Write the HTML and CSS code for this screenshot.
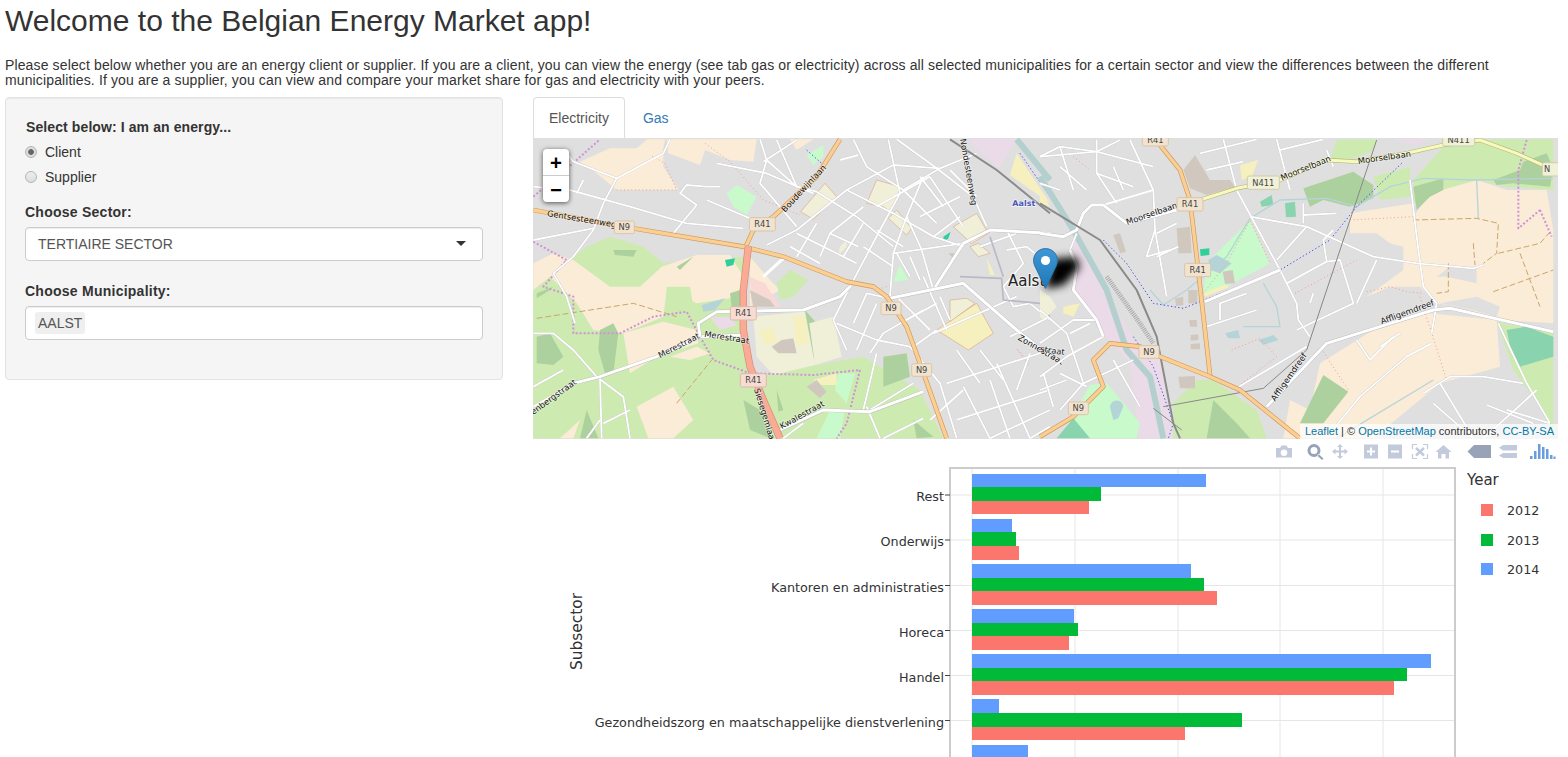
FILE: index.html
```html
<!DOCTYPE html>
<html lang="en">
<head>
    <meta charset="UTF-8">
    <meta name="viewport" content="width=device-width, initial-scale=1.0">
    <title>Belgian Energy Market</title>
    <link rel="stylesheet" href="styles.css">
</head>
<body>
    <div class="page">
        <h2 class="title">Welcome to the Belgian Energy Market app!</h2>
        <p class="intro">Please select below whether you are an energy client or supplier. If you are a client, you can view the energy (see tab gas or electricity) across all selected municipalities for a certain sector and view the differences between the different municipalities. If you are a supplier, you can view and compare your market share for gas and electricity with your peers.</p>

        <div class="row">
            <div class="sidebar">
                <div class="field field-radio">
                    <div class="label label-first">Select below: I am an energy...</div>
                    <label class="radio"><input type="radio" name="kind" checked> Client</label>
                    <label class="radio"><input type="radio" name="kind"> Supplier</label>
                </div>
                <div class="field field-sector">
                    <div class="label">Choose Sector:</div>
                    <div class="select">TERTIAIRE SECTOR<span class="caret"></span></div>
                </div>
                <div class="field">
                    <div class="label">Choose Municipality:</div>
                    <div class="select select-multi"><span class="chip">AALST</span></div>
                </div>
            </div>

            <div class="main">
                <ul class="tabs">
                    <li class="tab active">Electricity</li>
                    <li class="tab">Gas</li>
                </ul>

                <div class="map">
                    <svg class="map-tiles" viewBox="0 0 1025 301" width="1025" height="301">
                        <defs>
                            <!-- white street network, drawn twice: casing and fill -->
                            <g id="streets-left">
                                <path d="M10,290 L120,300 300,350 470,400 640,415"/>
                                <path d="M110,190 L130,215 260,265 400,190 420,148"/>
                                <path d="M260,265 L220,340 190,420 130,500 70,550 110,620 135,700"/>
                                <path d="M10,450 L190,415"/>
                                <path d="M160,270 L140,310"/>
                                <path d="M430,430 L500,345 450,310 470,285 530,290 570,290"/>
                                <path d="M530,330 L660,385"/>
                                <path d="M560,220 L710,250 850,310"/>
                                <path d="M710,210 L690,280 800,410"/>
                                <path d="M690,148 L710,210 800,290 860,305 980,380 1090,470"/>
                                <path d="M970,148 L1010,230 1120,300 1220,400"/>
                                <path d="M1075,148 L1110,310 1050,420 960,590 910,690 950,780"/>
                                <path d="M1100,148 L1220,235 1330,320 1370,410"/>
                                <path d="M1340,190 L1230,235 1090,225 950,300 800,420 710,465"/>
                                <path d="M950,300 L1090,370 1210,440 1300,470"/>
                                <path d="M800,430 L980,520"/>
                                <path d="M780,470 L870,520"/>
                                <path d="M860,400 L800,500"/>
                                <path d="M1000,350 L900,430 870,500"/>
                                <path d="M1200,260 L1300,410"/>
                                <path d="M1180,260 L1130,380 1090,490 1080,620"/>
                                <path d="M1090,490 L1300,460"/>
                                <path d="M1130,380 L1175,480 1210,600"/>
                                <path d="M10,950 L130,880 210,860 380,800"/>
                                <path d="M210,860 L215,1045"/>
                                <path d="M10,730 L70,730 130,780 200,860 280,920 300,1045"/>
                                <path d="M10,890 L100,840"/>
                                <path d="M920,700 L1040,750 1140,770"/>
                                <path d="M1040,790 L1000,960"/>
                                <path d="M1020,790 L1060,730 1180,660"/>
                                <path d="M1140,770 L1230,880 1280,1045"/>
                                <path d="M1250,880 L1560,780"/>
                                <path d="M1280,990 L1560,900"/>
                                <path d="M1380,1045 L1560,960"/>
                                <path d="M1210,730 L1460,620"/>
                                <path d="M1400,820 L1500,1045"/>
                                <path d="M1500,790 L1460,900"/>
                                <path d="M1180,560 L1250,720"/>
                                <path d="M1430,420 L1480,520 1420,590 1450,650 1500,640 1560,690"/>
                                <path d="M1350,470 L1460,430"/>
                                <path d="M740,150 L800,290"/>
                                <path d="M800,150 L700,215"/>
                                <path d="M930,210 L985,195"/>
                                <path d="M1000,400 L940,500"/>
                                <path d="M900,430 L985,470"/>
                                <path d="M1000,470 L1090,530"/>
                                <path d="M1040,420 L1120,470"/>
                                <path d="M1120,300 L1230,235"/>
                                <path d="M1040,350 L1200,260"/>
                                <path d="M1170,380 L1290,320"/>
                                <path d="M1210,440 L1290,380"/>
                                <path d="M1260,240 L1340,320"/>
                                <path d="M1170,260 L1240,350"/>
                                <path d="M1100,490 L1140,560"/>
                                <path d="M1140,500 L1170,570"/>
                                <path d="M1230,620 L1260,690"/>
                                <path d="M1100,620 L1200,720"/>
                                <path d="M1110,700 L1220,640"/>
                                <path d="M1150,770 L1220,720"/>
                                <path d="M970,700 L1010,610 1080,625"/>
                                <path d="M980,780 L1040,640"/>
                                <path d="M1280,780 L1350,880"/>
                                <path d="M1350,780 L1420,870"/>
                                <path d="M1440,740 L1560,680"/>
                                <path d="M1200,990 L1300,900"/>
                                <path d="M1300,890 L1380,1045"/>
                                <path d="M1440,1045 L1380,870"/>
                                <path d="M820,1000 L760,1045"/>
                                <path d="M1010,950 L1050,1045"/>
                                <path d="M1150,880 L1020,960"/>
                                <path d="M1060,1045 L1180,985"/>
                                <path d="M170,1045 L210,990"/>
                                <path d="M220,1000 L300,960"/>
                                <path d="M1550,520 L1490,470 1430,480"/>
                                <path d="M1500,1045 L1560,1010"/>
                            </g>
                            <g id="streets-right">
                                <path d="M110,430 L90,480 110,530 100,600 170,690 190,740 80,800 0,860"/>
                                <path d="M630,380 L800,410 1000,500 1130,520 1300,535 1330,525"/>
                                <path d="M550,148 L590,300 720,540 770,640 775,690 810,740"/>
                                <path d="M710,148 L750,300"/>
                                <path d="M480,190 L650,148"/>
                                <path d="M500,240 L610,215"/>
                                <path d="M720,180 L850,148"/>
                                <path d="M860,180 L880,230"/>
                                <path d="M1110,270 L1130,440 1150,590 1190,640 1175,730"/>
                                <path d="M950,640 L1010,510"/>
                                <path d="M740,580 L860,515 900,510 940,640 770,720"/>
                                <path d="M500,710 L650,660"/>
                                <path d="M540,690 L540,640 620,610"/>
                                <path d="M870,1030 L960,920 1100,800 1175,760"/>
                                <path d="M1375,700 L1460,880 1530,1000"/>
                                <path d="M1150,910 L1230,860 1330,860 1450,880"/>
                                <path d="M1180,940 L1300,1045"/>
                                <path d="M1340,945 L1480,1000"/>
                                <path d="M270,150 L340,300 345,420 380,620"/>
                                <path d="M190,345 L340,300"/>
                                <path d="M345,420 L320,500 390,480"/>
                                <path d="M60,170 L170,185 340,230"/>
                                <path d="M170,150 L170,250 230,340"/>
                                <path d="M0,200 L60,170 100,300"/>
                                <path d="M0,760 L100,690 170,690"/>
                                <path d="M0,660 L80,730 130,880 60,960"/>
                                <path d="M130,880 L280,810"/>
                                <path d="M220,810 L300,950"/>
                                <path d="M790,340 L790,400"/>
                                <path d="M790,375 L890,370"/>
                                <path d="M810,640 L820,610"/>
                                <path d="M580,900 L800,770"/>
                                <path d="M950,750 L990,810 1060,740"/>
                                <path d="M1020,770 L1080,730"/>
                                <path d="M0,200 L170,185"/>
                                <path d="M60,230 L140,300"/>
                                <path d="M0,280 L60,300"/>
                                <path d="M170,250 L280,290"/>
                                <path d="M220,230 L250,300"/>
                                <path d="M240,150 L170,185"/>
                                <path d="M350,430 L410,400"/>
                                <path d="M350,500 L415,470"/>
                                <path d="M10,850 L40,950"/>
                                <path d="M60,850 L140,890"/>
                                <path d="M0,900 L80,870"/>
                                <path d="M150,700 L90,730"/>
                                <path d="M800,410 L710,510"/>
                                <path d="M860,515 L850,450 880,420"/>
                                <path d="M1330,1045 L1490,900"/>
                                <path d="M1200,880 L1300,1045"/>
                                <path d="M1400,960 L1530,1000"/>
                            </g>
                        </defs>

                        <rect class="land" width="1025" height="301"/>

                        <g transform="translate(-3,-48) scale(.33333)">
                            <!-- farmland and meadow -->
                            <path class="green" d="M10,590 L170,470 240,440 340,470 400,520 640,500 660,860 1000,800 1170,900 1240,1045 10,1045Z"/>
                            <path class="peach" d="M150,215 L240,175 320,175 352,148 405,148 400,175 400,230 445,300 260,300 200,250Z"/>
                            <path class="peach" d="M415,190 L410,148 680,148 670,215 600,210 525,180 510,225Z"/>
                            <path class="peach" d="M780,148 L850,148 800,180Z"/>
                            <path class="peach" d="M10,520 L70,490 130,510 240,590 330,590 395,530 500,495 600,495 640,560 630,620 500,640 410,600 400,680 280,730 190,720 140,640 100,600 60,560 10,600Z"/>
                            <path class="peach" d="M280,730 L400,695 500,720 505,760 380,800 300,850Z"/>
                            <path class="peach" d="M320,950 L430,890 490,990 430,1045 355,1045Z"/>
                            <path class="peach" d="M420,800 L500,770 540,790 480,810Z"/>
                            <path class="peach" d="M90,1045 L150,990 130,1045Z"/>
                            <path class="peach" d="M660,500 L720,570 750,600 660,650Z"/>
                            <path class="green" d="M740,580 L780,540 835,570 790,620 750,630Z"/>
                            <path class="green" d="M410,590 L480,590 490,650 410,690Z"/>
                            <path class="forest" d="M250,480 L320,480 310,500 255,495Z"/>
                            <path class="forest" d="M440,530 L490,500 450,540Z"/>
                            <path class="forest" d="M210,720 L250,700 265,730 250,850 225,850 205,780Z"/>
                            <path class="forest" d="M20,740 L60,730 100,800 70,825 20,820Z"/>
                            <path class="forest" d="M20,610 L70,590 60,600 20,625Z"/>
                            <path class="forest" d="M600,610 L630,600 630,650 605,650Z"/>
                            <path class="forest" d="M640,930 L690,960 720,1045 660,1020Z"/>
                            <path class="forest" d="M740,900 L760,960 745,965Z"/>
                            <path class="forest" d="M1060,800 L1130,790 1140,860 1060,890Z"/>
                            <path class="forest" d="M1150,990 L1210,1040 1160,1045Z"/>
                            <path class="forest" d="M170,960 L205,1045 150,1045Z"/>
                            <path class="forest" d="M825,660 L860,700 850,820 830,770Z"/>
                            <path class="lime" d="M590,310 L620,285 680,320 650,375 610,350Z"/>
                            <path class="lime" d="M830,195 L880,165 880,200 850,225Z"/>
                            <path class="lime" d="M1090,575 L1110,525 1135,570Z"/>
                            <path class="lime" d="M925,850 L975,850 950,940 915,900Z"/>
                            <path class="lime" d="M860,1045 L900,960 945,960 930,1045Z"/>
                            <!-- built-up plots -->
                            <path class="school" d="M670,680 L825,665 855,825 730,855 680,800Z"/>
                            <path class="school" d="M838,700 L910,680 935,800 855,825Z"/>
                            <path class="yellow" d="M690,720 L730,715 740,760 700,760Z"/>
                            <path class="yellow" d="M790,680 L825,680 835,760 800,765Z"/>
                            <path class="tan" d="M725,770 L755,750 790,745 800,790 760,790 745,790Z"/>
                            <path class="school plot" d="M812,365 L885,280 920,320 850,388Z"/>
                            <path class="school plot" d="M1010,340 L1040,270 1110,290 1105,320 1080,365 1060,350Z"/>
                            <path class="school plot" d="M1075,385 L1100,360 1145,415 1130,435Z"/>
                            <path class="school plot" d="M1270,410 L1340,370 1375,430 1325,460Z"/>
                            <path class="school plot" d="M1320,470 L1345,460 1380,490 1345,500Z"/>
                            <path class="yellow plot" d="M1220,720 L1340,640 1390,730 1315,780Z"/>
                            <path class="school plot" d="M1260,630 L1310,625 1335,640 1260,695Z"/>
                            <path class="pink" d="M660,560 L705,580 750,650 665,650Z"/>
                            <path class="school" d="M930,470 L950,450 950,470 925,495Z"/>
                            <path class="lilac" d="M1310,148 L1460,148 1405,235Z"/>
                            <path class="lilac" d="M540,680 L600,680 620,705 570,720Z"/>
                            <path class="yellow" d="M1460,190 L1560,340 1440,255Z"/>
                            <path class="yellow" d="M1370,505 L1395,555 1380,555Z"/>
                            <path class="yellow" d="M850,870 L920,850 920,885 870,885Z"/>
                            <path class="teal" d="M585,510 L615,505 610,525 590,530Z"/>
                            <path class="teal" d="M1240,440 L1262,425 1255,445 1242,455Z"/>
                            <path class="tan" d="M660,600 L720,630 735,650 670,650Z"/>
                            <path class="tan" d="M830,890 L860,870 890,905 870,925Z"/>
                            <path class="tan" d="M1255,490 L1280,490 1275,510Z"/>
                            <path class="water" d="M515,645 L585,625 555,660 520,665Z"/>
                            <path class="river" d="M1460,148 L1560,270"/>
                            <!-- boundaries -->
                            <path class="path-line" d="M10,320 L100,245 210,148"/>
                            <path class="path-line" d="M10,455 L110,510 40,590 130,620 130,730 270,730 370,680 470,665 510,740 550,810 660,850 850,855 990,840 950,1000 920,1045"/>
                            <path class="trail" d="M260,300 L440,300 405,220 360,195"/>
                            <path class="trail" d="M525,160 L600,215 700,330 810,375"/>
                            <path class="trail" d="M1070,590 L1040,600"/>
                            <path class="trail" d="M1495,815 L1460,775 1500,830"/>
                            <path class="dash" d="M20,685 L310,640 440,680"/>
                            <path class="dash" d="M440,940 L545,810"/>
                            <path class="blue-line" d="M830,180 L880,225"/>
                            <path class="blue-line" d="M1470,190 L1560,320"/>
                            <use href="#streets-left" class="street-case"/>
                            <use href="#streets-left" class="street"/>
                            <!-- wide town streets -->
                            <path class="wide-case" d="M1210,600 L1300,460 1380,420 1560,430"/>
                            <path class="wide" d="M1210,600 L1300,460 1380,420 1560,430"/>
                            <path class="wide-case" d="M1080,625 L1300,580 1460,720 1560,800"/>
                            <path class="wide" d="M1080,625 L1300,580 1460,720 1560,800"/>
                            <path class="wide-case" d="M650,735 L510,740 380,800 210,860 130,880"/>
                            <path class="wide" d="M650,735 L510,740 380,800 210,860 130,880"/>
                            <path class="wide-case" d="M510,740 L505,700 560,665 820,660 930,620 960,590"/>
                            <path class="wide" d="M510,740 L505,700 560,665 820,660 930,620 960,590"/>
                            <path class="wide-case" d="M750,1020 L880,960 1020,965 1180,905"/>
                            <path class="wide" d="M750,1020 L880,960 1020,965 1180,905"/>
                            <path class="wide" d="M700,560 L760,505"/>
                            <path class="ring" d="M1290,560 L1415,565 1420,630 1530,640 1560,680"/>
                            <path class="ring" d="M1380,440 L1420,560"/>
                            <path class="rail" d="M1260,148 L1400,240 1560,370"/>
                            <!-- main roads -->
                            <path class="orange-case" d="M930,148 L860,260 730,380 670,420 645,475"/>
                            <path class="orange" d="M930,148 L860,260 730,380 670,420 645,475"/>
                            <path class="orange-case" d="M10,360 L250,405 640,470 760,500 950,575 1030,590 1070,620 1130,710 1170,820 1250,1045"/>
                            <path class="orange" d="M10,360 L250,405 640,470 760,500 950,575 1030,590 1070,620 1130,710 1170,820 1250,1045"/>
                            <path class="trunk-case" d="M655,470 L640,600 640,720 660,830 700,930 750,1045"/>
                            <path class="trunk" d="M655,470 L640,600 640,720 660,830 700,930 750,1045"/>
                            <!-- names -->
                            <text class="street-name" transform="translate(50,378) rotate(9.5)">Gentsesteenweg</text>
                            <text class="street-name" transform="translate(765,368) rotate(-47)">Boudewijnlaan</text>
                            <text class="street-name" transform="translate(390,805) rotate(-27)">Merestraat</text>
                            <text class="street-name" transform="translate(522,740) rotate(9)">Merestraat</text>
                            <text class="street-name" transform="translate(755,1018) rotate(-29)">Kwalestraat</text>
                            <text class="street-name" transform="translate(672,898) rotate(73)">Siesegemlaan</text>
                            <text class="street-name" transform="translate(10,975) rotate(-36)">enbergstraat</text>
                            <text class="street-name" transform="translate(1462,748) rotate(30)">Zonnestraat</text>
                            <text class="street-name" transform="translate(1290,148) rotate(80)">Nondesteenweg</text>
                            <text class="station" x="1447" y="349">Aalst</text>
                            <g transform="translate(253,393)"><rect class="shield" width="60" height="38" rx="5"/><text class="shield-text" x="30" y="28">N9</text></g>
                            <g transform="translate(658,383)"><rect class="shield" width="78" height="40" rx="5"/><text class="shield-text" x="39" y="29">R41</text></g>
                            <g transform="translate(601,650)"><rect class="shield shield-red" width="78" height="40" rx="5"/><text class="shield-text" x="39" y="29">R41</text></g>
                            <g transform="translate(631,851)"><rect class="shield shield-red" width="78" height="40" rx="5"/><text class="shield-text" x="39" y="29">R41</text></g>
                            <g transform="translate(1053,636)"><rect class="shield" width="60" height="38" rx="5"/><text class="shield-text" x="30" y="28">N9</text></g>
                            <g transform="translate(1145,821)"><rect class="shield" width="60" height="38" rx="5"/><text class="shield-text" x="30" y="28">N9</text></g>
                        </g>

                        <g transform="translate(507,-48) scale(.33333)">
                            <path class="lilac" d="M100,430 L190,590 300,780 360,800 400,1045 300,1045 270,820 180,720 100,600Z"/>
                            <path class="lilac" d="M1060,148 L1170,148 1120,165Z"/>
                            <!-- farmland to the east -->
                            <path class="peach" d="M930,370 L1120,340 1120,380 1170,310 1310,270 1400,300 1520,300 1540,420 1540,700 1380,690 1260,650 1190,640 1140,590 1050,590 980,620 1090,540 1090,470 1050,460 1010,430 930,430Z"/>
                            <path class="peach" d="M730,1045 L750,930 810,960 840,820 1000,720 1170,670 1370,690 1380,830 1200,880 1000,1045Z"/>
                            <path class="land" d="M1190,560 L1230,530 1310,530 1310,580 1220,560Z"/>
                            <path class="land" d="M1200,640 L1310,620 1380,650 1370,680 1260,650Z"/>
                            <path class="green" d="M890,150 L1010,148 1000,180 950,205 870,210Z"/>
                            <path class="green" d="M1000,260 L1110,230 1110,320 1020,330Z"/>
                            <path class="green" d="M1120,270 L1215,165 1370,148 1540,148 1540,300 1400,290 1310,270 1170,310 1120,340Z"/>
                            <path class="forest" d="M790,295 L940,245 1000,285 1000,325 930,350 850,330 810,350Z"/>
                            <path class="forest" d="M1120,290 L1210,265 1210,300 1170,320 1130,360Z"/>
                            <path class="forest" d="M1360,270 L1440,240 1450,215 1520,190 1540,235 1530,290 1420,280 1370,285Z"/>
                            <path class="forest" d="M780,1000 L850,855 925,905 850,1000Z"/>
                            <path class="green" d="M400,1045 L400,940 470,870 520,870 650,960 680,1045Z"/>
                            <path class="forest" d="M520,930 L590,1000 630,1045 500,1045Z"/>
                            <path class="green" d="M1370,695 L1540,730 1540,1045 1500,950 1420,840Z"/>
                            <path class="leaf" d="M1400,720 L1460,710 1540,740 1540,800 1440,830 1410,770Z"/>
                            <path class="lime" d="M490,610 L500,520 630,390 690,520 560,590Z"/>
                            <path class="lime" d="M60,1045 L150,885 200,880 300,1000 290,1045Z"/>
                            <path class="leaf" d="M50,1045 L100,985 150,1045Z"/>
                            <path class="leaf" d="M735,340 L765,335 768,380 738,382Z"/>
                            <path class="leaf" d="M660,335 L695,315 700,345 665,350Z"/>
                            <path class="teal" d="M480,478 L508,475 508,495 482,498Z"/>
                            <path class="tan" d="M430,240 L465,195 510,270 570,270 585,290 500,315 450,295Z"/>
                            <path class="tan" d="M220,435 L240,430 258,485 240,490Z"/>
                            <path class="tan" d="M410,415 L450,410 455,490 415,490Z"/>
                            <path class="tan" d="M548,545 L578,540 585,580 555,582Z"/>
                            <path class="tan" d="M415,860 L465,858 465,895 420,895Z"/>
                            <path class="tan" d="M405,625 L430,620 430,645 408,648Z"/>
                            <path class="tan" d="M445,600 L472,600 472,640 445,640Z"/>
                            <path class="tan" d="M448,690 L470,690 472,710 450,710Z"/>
                            <path class="tan" d="M452,735 L475,733 475,750 452,752Z"/>
                            <path class="tan" d="M452,762 L480,760 480,778 452,778Z"/>
                            <path class="yellow" d="M600,225 L655,210 635,260 605,270Z"/>
                            <path class="yellow" d="M490,610 L550,585 570,590 495,620Z"/>
                            <path class="school" d="M0,600 L30,620 50,650 10,690 0,680Z"/>
                            <path class="yellow" d="M70,650 L120,640 100,680 70,670Z"/>
                            <path class="yellow" d="M0,300 L30,350 0,340Z"/>
                            <path class="water" d="M505,510 L530,495 575,520 540,550 510,540Z"/>
                            <path class="water" d="M555,730 L595,720 600,745 565,745Z"/>
                            <path class="water" d="M655,750 L700,735 715,750 670,765Z"/>
                            <path class="water" d="M212,960 A20,20 0 1,1 250,950 L235,985 220,990Z"/>
                            <!-- streams and canal -->
                            <path class="river" d="M0,260 L100,420 200,600 260,780 330,860 350,950 370,1045"/>
                            <path class="stream" d="M330,600 L370,645 440,600 560,500 630,385 720,330 860,325 950,350 1050,290 1150,265 1300,270 1540,265"/>
                            <path class="stream" d="M1310,270 L1315,385"/>
                            <path class="stream" d="M670,580 L710,650 720,710 610,710"/>
                            <path class="stream" d="M1180,870 L890,1045"/>
                            <!-- boundaries and trails -->
                            <path class="blue-line" d="M190,450 L260,520 340,640 430,655 720,540 870,450 950,350 1090,215"/>
                            <path class="blue-line" d="M280,740 L340,830 400,1000 385,1045"/>
                            <path class="blue-line" d="M1480,910 L1530,1000"/>
                            <path class="trail" d="M930,390 L1120,380"/>
                            <path class="trail" d="M765,610 L950,510"/>
                            <path class="trail" d="M575,780 L660,745 710,800 580,900"/>
                            <path class="trail" d="M490,610 L560,520 630,390 690,520"/>
                            <path class="trail" d="M980,605 L1050,590 1100,605 1150,610"/>
                            <path class="trail" d="M1140,620 L1220,870"/>
                            <path class="trail" d="M850,785 L925,900"/>
                            <path class="trail" d="M100,200 L150,240"/>
                            <path class="dash" d="M1120,390 L1310,385 1375,400 1370,490 1330,520"/>
                            <path class="dash" d="M1375,490 L1500,460 1535,420"/>
                            <path class="dash" d="M1300,460 L1305,525"/>
                            <path class="dash" d="M1440,490 L1470,570 1500,650"/>
                            <path class="dash" d="M1360,605 L1540,540"/>
                            <path class="dash" d="M1225,520 L1225,605 1190,610"/>
                            <path class="path-line" d="M1460,150 L1435,240 1435,415 1500,360"/>
                            <path class="path-line" d="M1500,360 L1535,440"/>
                            <use href="#streets-right" class="street-case"/>
                            <use href="#streets-right" class="street"/>
                            <path class="wide-case" d="M0,430 L70,440 110,420 130,370 155,345 190,345 260,400 410,360"/>
                            <path class="wide" d="M0,430 L70,440 110,420 130,370 155,345 190,345 260,400 410,360"/>
                            <path class="wide-case" d="M495,635 L720,540"/>
                            <path class="wide" d="M495,635 L720,540"/>
                            <path class="wide-case" d="M680,950 L860,760 1020,710 1180,660 1230,655 1540,725"/>
                            <path class="wide" d="M680,950 L860,760 1020,710 1180,660 1230,655 1540,725"/>
                            <path class="wide-case" d="M90,480 L110,530 100,600 170,690 190,740"/>
                            <path class="wide" d="M90,480 L110,530 100,600 170,690 190,740"/>
                            <!-- railway and pylons -->
                            <path class="rail" d="M0,340 L180,450 290,600 350,740 400,1000 420,1045"/>
                            <path class="rail-yard" d="M200,560 L300,700 340,760"/>
                            <path class="pylon" d="M1010,150 L800,780 670,895 370,950"/>
                            <path class="pylon" d="M340,955 L425,1020"/>
                            <!-- main roads -->
                            <path class="minor-case" d="M480,330 L590,295 720,270 860,210 950,215 1100,190 1210,165 1320,150 1430,190 1530,235"/>
                            <path class="minor" d="M480,330 L590,295 720,270 860,210 950,215 1100,190 1210,165 1320,150 1430,190 1530,235"/>
                            <path class="orange-case" d="M360,165 L420,240 450,330 470,500 510,855"/>
                            <path class="orange" d="M360,165 L420,240 450,330 470,500 510,855"/>
                            <path class="orange-case" d="M0,1040 L100,980 190,890 160,810 210,760 300,770 360,800 510,860 600,900 780,1045"/>
                            <path class="orange" d="M0,1040 L100,980 190,890 160,810 210,760 300,770 360,800 510,860 600,900 780,1045"/>
                            <!-- names -->
                            <text class="street-name" transform="translate(262,405) rotate(-19)">Moorselbaan</text>
                            <text class="street-name" transform="translate(726,272) rotate(-22)">Moorselbaan</text>
                            <text class="street-name" transform="translate(955,222) rotate(-8)">Moorselbaan</text>
                            <text class="street-name" transform="translate(1025,703) rotate(-20)">Affligemdreef</text>
                            <text class="street-name" transform="translate(705,935) rotate(-55)">Affligemdreef</text>
                            <text class="street-name" transform="translate(0,785) rotate(8)">straat</text>
                            <g transform="translate(307,130)"><rect class="shield" width="78" height="38" rx="5"/><text class="shield-text" x="39" y="28">R41</text></g>
                            <g transform="translate(411,323)"><rect class="shield" width="78" height="40" rx="5"/><text class="shield-text" x="39" y="29">R41</text></g>
                            <g transform="translate(434,520)"><rect class="shield" width="78" height="40" rx="5"/><text class="shield-text" x="39" y="29">R41</text></g>
                            <g transform="translate(297,767)"><rect class="shield" width="60" height="38" rx="5"/><text class="shield-text" x="30" y="28">N9</text></g>
                            <g transform="translate(85,936)"><rect class="shield" width="60" height="38" rx="5"/><text class="shield-text" x="30" y="28">N9</text></g>
                            <g transform="translate(622,258)"><rect class="shield shield-pale" width="96" height="40" rx="5"/><text class="shield-text" x="48" y="29">N411</text></g>
                            <g transform="translate(1208,130)"><rect class="shield shield-pale" width="96" height="38" rx="5"/><text class="shield-text" x="48" y="28">N411</text></g>
                            <g transform="translate(1507,218)"><rect class="shield shield-pale" width="60" height="40" rx="5"/><text class="shield-text" x="14" y="29">N</text></g>
                        </g>

                        <text class="town" x="475" y="148">Aalst</text>
                    </svg>

                    <svg class="marker-shadow" viewBox="0 0 41 41" width="41" height="41">
                        <path d="M3,38 L10,8 34,6 38,16 22,34Z"/>
                    </svg>
                    <svg class="marker" viewBox="0 0 25 41" width="25" height="41">
                        <defs>
                            <linearGradient id="pin" x1="0" y1="0" x2="0" y2="1">
                                <stop offset="0" stop-color="#3f97d6"/>
                                <stop offset="1" stop-color="#1f78b8"/>
                            </linearGradient>
                        </defs>
                        <path d="M12.5,.6 C5.8,.6 .6,5.9 .6,12.4 C.6,15 1.5,17.6 2.8,20 L12.5,40.4 L22.2,20 C23.5,17.6 24.4,15 24.4,12.4 C24.4,5.9 19.2,.6 12.5,.6Z" fill="url(#pin)" stroke="#2a73a8"/>
                        <circle cx="12.5" cy="12.5" r="4.6" fill="#fff"/>
                    </svg>

                    <div class="zoom">
                        <div class="zoom-btn">+</div>
                        <div class="zoom-btn">&#8722;</div>
                    </div>
                    <div class="attribution"><span class="link">Leaflet</span> | &copy; <span class="link">OpenStreetMap</span> contributors, <span class="link">CC-BY-SA</span></div>
                </div>

                <svg class="chart" viewBox="533 439 1025 318" width="1025" height="318">
                    <!-- modebar -->
                    <g class="mode">
                        <path d="M1276,448 H1280 L1281.500,445.500 H1286.500 L1288,448 H1292 V457.500 H1276Z M1284,449.500 A3.300,3.300 0 1,0 1284,456.100 A3.300,3.300 0 1,0 1284,449.500Z" fill-rule="evenodd"/>
                        <path class="mode-on" fill-rule="evenodd" d="M1314,444 A6.500,6.500 0 1,1 1314,457 A6.500,6.500 0 1,1 1314,444Z M1314,447 A3.500,3.500 0 1,0 1314,454 A3.500,3.500 0 1,0 1314,447Z M1318.500,454 L1323.500,458.500 1322,460 1317,455.500Z"/>
                        <path d="M1340,444 L1343,447 H1341 V450.500 H1344.500 V448.500 L1348,451.500 1344.500,454.500 V452.500 H1341 V456 H1343 L1340,459 1337,456 H1339 V452.500 H1335.500 V454.500 L1332,451.500 1335.500,448.500 V450.500 H1339 V447 H1337Z"/>
                        <path fill-rule="evenodd" d="M1364,444.500 H1378 V458.500 H1364Z M1370,447.500 V450.500 H1367 V452.500 H1370 V455.500 H1372 V452.500 H1375 V450.500 H1372 V447.500Z"/>
                        <path fill-rule="evenodd" d="M1388,444.500 H1402 V458.500 H1388Z M1391,450.500 V452.500 H1399 V450.500Z"/>
                        <path class="mode-line" d="M1417,444.500 H1412.500 V449 M1423,444.500 H1427.500 V449 M1417,458.500 H1412.500 V454 M1423,458.500 H1427.500 V454"/>
                        <path class="mode-thick" d="M1416,448 L1424,455.500 M1424,448 L1416,455.500"/>
                        <path d="M1443.500,445 L1451.500,452 H1449 V458.500 H1445.500 V454 H1441.500 V458.500 H1438 V452 H1435.500Z"/>
                        <path class="mode-on" d="M1467.500,451.500 L1474,445 H1491 V458 H1474Z"/>
                        <path d="M1503,445 H1517 V450.500 H1503 L1499,447.700Z M1503,453 H1517 V458 H1503 L1499,455.500Z"/>
                        <g class="mode-logo">
                            <rect x="1530" y="456" width="2.500" height="3"/>
                            <rect x="1534" y="451" width="2.500" height="8"/>
                            <rect x="1538" y="444" width="2.500" height="15"/>
                            <rect x="1542" y="447" width="2.500" height="12"/>
                            <rect x="1546" y="449" width="2.500" height="10"/>
                            <rect x="1550" y="455" width="2.500" height="4"/>
                            <rect x="1553.500" y="456.500" width="2" height="2.500"/>
                        </g>
                    </g>

                    <!-- grid -->
                    <g class="grid">
                        <path d="M972,469 V757 M1075,469 V757 M1178,469 V757 M1280,469 V757 M1383,469 V757"/>
                        <path d="M951,495 H1454 M951,540 H1454 M951,585.500 H1454 M951,630.500 H1454 M951,675.500 H1454 M951,720.500 H1454"/>
                    </g>

                    <!-- Rest -->
                    <rect class="y14" x="972" y="474" width="234" height="13"/>
                    <rect class="y13" x="972" y="487" width="129" height="14"/>
                    <rect class="y12" x="972" y="501" width="117" height="13"/>
                    <!-- Onderwijs -->
                    <rect class="y14" x="972" y="519" width="40" height="13"/>
                    <rect class="y13" x="972" y="532" width="44" height="14"/>
                    <rect class="y12" x="972" y="546" width="47" height="14"/>
                    <!-- Kantoren -->
                    <rect class="y14" x="972" y="564" width="219" height="14"/>
                    <rect class="y13" x="972" y="578" width="232" height="13"/>
                    <rect class="y12" x="972" y="591" width="245" height="14"/>
                    <!-- Horeca -->
                    <rect class="y14" x="972" y="609" width="102" height="14"/>
                    <rect class="y13" x="972" y="623" width="106" height="13"/>
                    <rect class="y12" x="972" y="636" width="97" height="14"/>
                    <!-- Handel -->
                    <rect class="y14" x="972" y="654" width="459" height="14"/>
                    <rect class="y13" x="972" y="668" width="435" height="13"/>
                    <rect class="y12" x="972" y="681" width="422" height="14"/>
                    <!-- Gezondheidszorg -->
                    <rect class="y14" x="972" y="699" width="27" height="14"/>
                    <rect class="y13" x="972" y="713" width="270" height="14"/>
                    <rect class="y12" x="972" y="727" width="213" height="13"/>
                    <!-- cut off by the window -->
                    <rect class="y14" x="972" y="745" width="56" height="12"/>

                    <path class="frame" d="M950,757 V468 H1455 V757"/>
                    <path class="ticks" d="M945,495 H950 M945,540 H950 M945,585.500 H950 M945,630.500 H950 M945,675.500 H950 M945,720.500 H950"/>

                    <g class="ylabels">
                        <text x="944" y="501">Rest</text>
                        <text x="944" y="546">Onderwijs</text>
                        <text x="944" y="592">Kantoren en administraties</text>
                        <text x="944" y="637">Horeca</text>
                        <text x="944" y="682">Handel</text>
                        <text x="944" y="727">Gezondheidszorg en maatschappelijke dienstverlening</text>
                    </g>
                    <text class="axis-title" transform="translate(582,670) rotate(-90)">Subsector</text>

                    <text class="legend-title" x="1467" y="485">Year</text>
                    <rect class="y12" x="1481" y="504" width="12" height="12"/>
                    <text class="legend-text" x="1507" y="515">2012</text>
                    <rect class="y13" x="1481" y="534" width="12" height="12"/>
                    <text class="legend-text" x="1507" y="545">2013</text>
                    <rect class="y14" x="1481" y="563" width="12" height="12"/>
                    <text class="legend-text" x="1507" y="574">2014</text>
                </svg>
            </div>
        </div>
    </div>
</body>
</html>
```

FILE: styles.css
```css
html, body {
    margin: 0;
    height: 100%;
    overflow: hidden;
    background-color: #fff;
}

body {
    font-family: "Liberation Sans", Arial, sans-serif;
    font-size: 14px;
    color: #333;
}

.page {
    padding: 4px 5px 0;
}

.title {
    margin: 0 0 20px;
    font-size: 30px;
    font-weight: 400;
    line-height: 33px;
}

.intro {
    max-width: 1500px;
    margin: 0 0 10px;
    padding-top: 1px;
    height: 29px;
    line-height: 15px;
    letter-spacing: 0.13px;
}

.row {
    display: grid;
    grid-template-columns: 498px 1025px;
    gap: 30px;
    align-items: start;
}

/* sidebar */
.sidebar {
    box-sizing: border-box;
    height: 283px;
    padding: 19px;
    background-color: #f5f5f5;
    border: 1px solid #e3e3e3;
    border-radius: 4px;
    box-shadow: inset 0 1px 1px rgba(0, 0, 0, 0.05);
}

.field-radio {
    margin-bottom: 13px;
}

.field-sector {
    margin-bottom: 20px;
}

.label {
    margin-bottom: 5px;
    font-weight: 700;
    line-height: 20px;
    letter-spacing: 0.25px;
}

.label-first {
    margin-bottom: 2px;
    padding-left: 1px;
    letter-spacing: 0.1px;
}

.radio {
    display: flex;
    align-items: center;
    gap: 8px;
    height: 25px;
    line-height: 20px;
}

.radio input {
    appearance: none;
    box-sizing: border-box;
    width: 12px;
    height: 12px;
    margin: 0;
    border: 1px solid #b4b4b4;
    border-radius: 50%;
    background: linear-gradient(#eee, #ddd);
}

.radio input:checked {
    background: radial-gradient(circle, #666 0, #666 2.5px, #ddd 3.2px);
}

.select {
    position: relative;
    box-sizing: border-box;
    height: 34px;
    padding: 0 12px;
    color: #555;
    background-color: #fff;
    border: 1px solid #ccc;
    border-radius: 4px;
    box-shadow: inset 0 1px 1px rgba(0, 0, 0, 0.075);
    line-height: 32px;
}

.select-multi {
    padding: 5px 9px;
}

.chip {
    display: block;
    width: 50px;
    height: 22px;
    padding-left: 3px;
    box-sizing: border-box;
    background-color: #efefef;
    border-radius: 3px;
    line-height: 22px;
}

.caret {
    position: absolute;
    top: 13px;
    right: 16px;
    border-style: solid;
    border-width: 5px 5px 0;
    border-color: #333 transparent transparent;
}

/* tabs */
.tabs {
    display: flex;
    margin: 0;
    padding: 0;
    list-style: none;
}

.tab {
    box-sizing: border-box;
    height: 41px;
    padding: 10px 15px;
    margin-right: 2px;
    color: #337ab7;
    line-height: 20px;
    border: 1px solid transparent;
    border-bottom: 0;
}

.tab.active {
    color: #555;
    border-color: #ddd;
    border-radius: 4px 4px 0 0;
}

/* map */
.map {
    position: relative;
    height: 301px;
    overflow: hidden;
}

.map-tiles,
.chart {
    display: block;
}

.land { fill: #e0dfdf; }
.green { fill: #cdebb0; }
.peach { fill: #fbecd7; }
.forest { fill: #add19e; }
.lime { fill: #c8facc; }
.leaf { fill: #8ad3af; }
.school { fill: #f0f0d8; }
.yellow { fill: #f5f0bd; }
.tan { fill: #d0c8be; }
.pink { fill: #f8d9d6; }
.lilac { fill: #ebdbe8; }
.teal { fill: #2fce9a; }
.water { fill: #b5d4d8; }
.plot { stroke: #d9a98e; stroke-width: 2; }

.river, .stream, .rail, .rail-yard, .ring, .pylon, .wide, .wide-case,
.orange, .orange-case, .trunk, .trunk-case, .minor, .minor-case,
.trail, .dash, .path-line, .blue-line {
    fill: none;
    stroke-linejoin: round;
}

.river { stroke: #b3d0cf; stroke-width: 18; }
.stream { stroke: #b5d4d8; stroke-width: 4; }
.rail { stroke: #8a8a8a; stroke-width: 6; }
.rail-yard { stroke: #aaa; stroke-width: 14; stroke-dasharray: 3 3; }
.ring { stroke: #b7b9c6; stroke-width: 5; }
.pylon { stroke: #888; stroke-width: 3; }
.trail { stroke: #f2998c; stroke-width: 3; stroke-dasharray: 3 8; }
.dash { stroke: #c9a56c; stroke-width: 3; stroke-dasharray: 18 8; }
.path-line { stroke: #cf92d6; stroke-width: 6; stroke-dasharray: 6 6; }
.blue-line { stroke: #3c4cf2; stroke-width: 3; stroke-dasharray: 4 7; }

.street-case { fill: none; stroke: #c4c1c1; stroke-width: 7; stroke-linejoin: round; }
.street { fill: none; stroke: #fff; stroke-width: 5.5; stroke-linejoin: round; }
.wide-case { stroke: #b9b6b6; stroke-width: 11; }
.wide { stroke: #fff; stroke-width: 9; }
.orange-case { stroke: #cf9a5c; stroke-width: 14; }
.orange { stroke: #fbcf94; stroke-width: 10; }
.trunk-case { stroke: #d98b78; stroke-width: 22; }
.trunk { stroke: #f9ab96; stroke-width: 18; }
.minor-case { stroke: #b9b97a; stroke-width: 13; }
.minor { stroke: #f7fabf; stroke-width: 9; }

.street-name {
    font-family: "DejaVu Sans", sans-serif;
    font-size: 25px;
    fill: #111;
    stroke: #fff;
    stroke-width: 4px;
    paint-order: stroke;
    stroke-opacity: .5;
}

.station {
    font-family: "DejaVu Sans", sans-serif;
    font-size: 24px;
    font-weight: 700;
    fill: #4a56ba;
    stroke: #fff;
    stroke-width: 4px;
    paint-order: stroke;
    stroke-opacity: .7;
}

.shield { fill: #f1e3cf; stroke: #d9c6a9; stroke-width: 3; }
.shield-red { fill: #f6dcd2; stroke: #dcb8a8; }
.shield-pale { fill: #f1f0d8; stroke: #cfcda8; }

.shield-text {
    font-family: "DejaVu Sans", sans-serif;
    font-size: 25px;
    fill: #444;
    text-anchor: middle;
}

.town {
    font-family: "DejaVu Sans", sans-serif;
    font-size: 15px;
    fill: #222;
    stroke: #fff;
    stroke-width: 2px;
    paint-order: stroke;
    stroke-opacity: .6;
}

.marker {
    position: absolute;
    left: 500px;
    top: 110px;
}

.marker-shadow {
    position: absolute;
    left: 509px;
    top: 113px;
    filter: blur(4px);
}

.zoom {
    position: absolute;
    left: 10px;
    top: 11px;
    width: 26px;
    background-color: #fff;
    border-radius: 4px;
    box-shadow: 0 1px 5px rgba(0, 0, 0, 0.65);
}

.zoom-btn {
    height: 26px;
    color: #000;
    font-family: "DejaVu Sans Mono", monospace;
    font-size: 19px;
    font-weight: 700;
    line-height: 26px;
    text-align: center;
}

.zoom-btn:first-child {
    border-bottom: 1px solid #ccc;
}

.attribution {
    position: absolute;
    right: 0;
    bottom: 0;
    padding: 0 4px 0 5px;
    background-color: rgba(255, 255, 255, 0.7);
    font-size: 11px;
    line-height: 15px;
}

.link {
    color: #0078a8;
}

/* chart */
.mode { fill: #c2cadb; }
.mode-on { fill: #99a3b8; }
.mode-line { fill: none; stroke: #c2cadb; stroke-width: 1.2; }
.mode-thick { fill: none; stroke: #c2cadb; stroke-width: 2.5; }
.mode-logo { fill: #6b9be0; }

.grid path { fill: none; stroke: #e6e6e6; stroke-width: 1; }
.frame { fill: none; stroke: #ccc; stroke-width: 2; }
.ticks { fill: none; stroke: #444; stroke-width: 1; }

.y12 { fill: #fb766d; }
.y13 { fill: #00ba38; }
.y14 { fill: #619cff; }

.ylabels text {
    font-family: "DejaVu Sans", Verdana, sans-serif;
    font-size: 12.75px;
    fill: #333;
    text-anchor: end;
}

.axis-title {
    font-family: "DejaVu Sans", Verdana, sans-serif;
    font-size: 15.400px;
    fill: #333;
}

.legend-title {
    font-family: "DejaVu Sans", Verdana, sans-serif;
    font-size: 15px;
    fill: #333;
}

.legend-text {
    font-family: "DejaVu Sans", Verdana, sans-serif;
    font-size: 12.75px;
    fill: #333;
}
```
